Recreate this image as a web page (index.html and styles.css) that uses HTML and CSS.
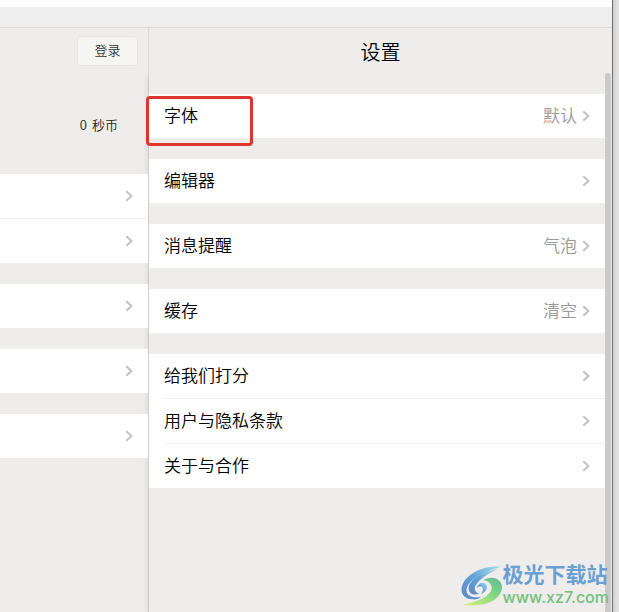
FILE: index.html
```html
<!DOCTYPE html>
<html lang="zh-CN">

<head>
  <meta charset="utf-8">
  <title>设置</title>
  <link rel="stylesheet" href="styles.css">
</head>

<body>
  <svg class="symbols" aria-hidden="true">
    <symbol id="chevron" viewBox="0 0 8 12">
      <path d="M1.3 1.2 L6.4 6 L1.3 10.8" fill="none" stroke="#c2c2c2" stroke-width="2" />
    </symbol>
  </svg>

  <div class="window">
    <div class="tabs"></div>
    <div class="titlebar"></div>

    <div class="panes">
      <!-- account pane -->
      <aside class="account">
        <div class="account-top">
          <button class="login-btn" type="button">登录</button>
          <span class="coins"><span class="coin-count">0</span>秒币</span>
        </div>
        <nav class="groups">
          <div class="group">
            <a class="row" href="#" aria-label="1"><svg class="chevron"><use href="#chevron" /></svg></a>
            <a class="row" href="#" aria-label="2"><svg class="chevron"><use href="#chevron" /></svg></a>
          </div>
          <div class="group">
            <a class="row" href="#" aria-label="3"><svg class="chevron"><use href="#chevron" /></svg></a>
          </div>
          <div class="group">
            <a class="row" href="#" aria-label="4"><svg class="chevron"><use href="#chevron" /></svg></a>
          </div>
          <div class="group">
            <a class="row" href="#" aria-label="5"><svg class="chevron"><use href="#chevron" /></svg></a>
          </div>
        </nav>
      </aside>

      <!-- settings pane -->
      <main class="settings">
        <h1>设置</h1>
        <div class="scroll-area">
          <div class="groups settings-list">
            <div class="group highlighted">
              <a class="row" href="#">字体<span class="value">默认</span><svg class="chevron"><use href="#chevron" /></svg></a>
            </div>
            <div class="group">
              <a class="row" href="#">编辑器<span class="value"></span><svg class="chevron"><use href="#chevron" /></svg></a>
            </div>
            <div class="group">
              <a class="row" href="#">消息提醒<span class="value">气泡</span><svg class="chevron"><use href="#chevron" /></svg></a>
            </div>
            <div class="group">
              <a class="row" href="#">缓存<span class="value">清空</span><svg class="chevron"><use href="#chevron" /></svg></a>
            </div>
            <div class="group">
              <a class="row" href="#">给我们打分<span class="value"></span><svg class="chevron"><use href="#chevron" /></svg></a>
              <a class="row" href="#">用户与隐私条款<span class="value"></span><svg class="chevron"><use href="#chevron" /></svg></a>
              <a class="row" href="#">关于与合作<span class="value"></span><svg class="chevron"><use href="#chevron" /></svg></a>
            </div>
          </div>
          <div class="scrollbar"></div>
        </div>
      </main>
    </div>
  </div>

  <div class="watermark">
    <svg class="swirl" viewBox="10 14 130 126" aria-hidden="true">
      <defs>
        <linearGradient id="blue" x1="0" y1="1" x2="1" y2="0">
          <stop offset="0" stop-color="#5b87cc" />
          <stop offset="0.5" stop-color="#65a4d8" />
          <stop offset="1" stop-color="#a5e0e8" />
        </linearGradient>
        <linearGradient id="green" x1="0" y1="1" x2="1" y2="0">
          <stop offset="0" stop-color="#e2ee80" />
          <stop offset="0.5" stop-color="#8fdc80" />
          <stop offset="1" stop-color="#58b995" />
        </linearGradient>
      </defs>
      <path fill="url(#blue)" d="M138 22 C100 18 55 30 30 58 C8 84 12 118 50 120 C62 121 70 117 76 112 C50 118 28 108 32 88 C38 60 85 35 138 22 Z" />
      <path fill="url(#blue)" d="M126 28 C75 38 38 62 38 88 C38 104 55 109 70 103 C54 99 52 84 64 71 C78 54 98 42 126 28 Z" />
      <path fill="url(#blue)" d="M62 86 C66 72 80 66 90 74 C98 84 90 98 76 104 C82 94 82 84 76 82 C70 80 66 82 62 86 Z" />
      <path fill="url(#green)" d="M82 62 C110 46 138 60 138 84 C136 118 100 136 60 138 C45 139 30 138 18 136 C50 130 90 120 105 96 C112 80 102 66 82 62 Z" />
    </svg>
    <div class="watermark-text">
      <span class="site-name">极光下载站</span>
      <span class="site-url">www.xz7.com</span>
    </div>
  </div>
</body>

</html>
```

FILE: styles.css
```css
*,
*::after {
  box-sizing: border-box;
}

body {
  margin: 0;
  min-height: 100vh;
  display: flex;
  position: relative;
  padding-right: 6px;
  background: linear-gradient(to left, #e6e6e6, #cfcfcf 6px);
  font-family: "Noto Sans CJK SC", sans-serif;
  font-weight: 350;
  color: #000;
}

.symbols {
  position: absolute;
  width: 0;
  height: 0;
}

.window {
  flex: 1;
  display: flex;
  flex-direction: column;
  background-color: #eeedeb;
  border-right: 1px solid #6e6e6e;
}

.tabs {
  height: 7px;
  background-color: #fff;
}

.titlebar {
  height: 21px;
  background-color: #efefef;
  border-bottom: 1px solid #dad9d8;
}

.panes {
  flex: 1;
  display: flex;
}

/* account pane */
.account {
  flex: 0 0 149px;
  border-right: 1px solid #dad9d8;
}

.account-top {
  display: flex;
  flex-direction: column;
  align-items: flex-end;
  height: 146px;
  padding: 8px 10px;
}

.login-btn {
  width: 61px;
  height: 30px;
  padding: 0 0 4px;
  border: 1px solid #e5e5e3;
  border-radius: 4px;
  background-color: #f5f5f3;
  font-family: inherit;
  font-weight: inherit;
  font-size: 13px;
  color: #333;
  cursor: pointer;
}

.coins {
  margin-top: 49px;
  margin-right: 20px;
  font-size: 13px;
  line-height: 20px;
  color: #222;
}

.coin-count {
  margin-right: 5px;
}

/* settings pane */
.settings {
  flex: 1;
  display: flex;
  flex-direction: column;
}

h1 {
  margin: 0;
  height: 45px;
  line-height: 48px;
  font-size: 20px;
  font-weight: 350;
  text-align: center;
}

.scroll-area {
  flex: 1;
  display: flex;
  box-shadow: -3px 3px 4px rgba(0, 0, 0, 0.06);
}

.settings-list {
  flex: 1;
  padding-top: 21px;
}

.scrollbar {
  width: 6px;
  margin-right: 1px;
  border-radius: 3px 3px 0 0;
  background-color: #cacaca;
}

/* grouped rows */
.groups {
  display: flex;
  flex-direction: column;
  gap: 21px;
}

.group {
  position: relative;
  background-color: #fff;
}

.row {
  display: flex;
  align-items: center;
  height: 44px;
  padding-right: 15px;
  padding-bottom: 3px;
  font-size: 17px;
  color: #000;
  text-decoration: none;
}

.account .row {
  justify-content: flex-end;
}

.settings .row {
  margin-left: 15px;
}

.row + .row {
  height: 45px;
  border-top: 1px solid #f0f0f0;
}

.value {
  margin-left: auto;
  margin-right: 5px;
  color: #999;
}

.chevron {
  width: 8px;
  height: 12px;
  margin-top: 3px;
}

.highlighted::after {
  content: "";
  position: absolute;
  top: 2px;
  left: -3px;
  width: 107px;
  height: 50px;
  border: 3px solid #e0352f;
  border-radius: 4px;
}

/* watermark */
.watermark {
  position: absolute;
  right: 10px;
  bottom: 6px;
  display: flex;
  align-items: flex-end;
}

.swirl {
  width: 44px;
  height: 42px;
}

.watermark-text {
  display: flex;
  flex-direction: column;
}

.site-name {
  font-size: 21px;
  line-height: 30px;
  font-weight: 700;
  color: #6b9fd2;
}

.site-url {
  font-family: Inter, sans-serif;
  font-size: 16px;
  line-height: 18px;
  font-weight: 500;
  color: #72c07c;
}
```
